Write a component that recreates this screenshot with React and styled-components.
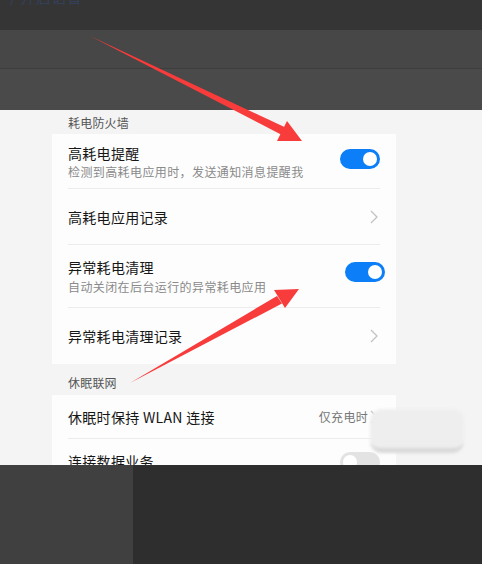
import React from "react";
import styled, { createGlobalStyle } from "styled-components";

const Global = createGlobalStyle`
  html, body { margin: 0; padding: 0; background: #2e2e2e; }
  body { font-family: "Noto Sans CJK SC", "Noto Sans", sans-serif; }
  * { box-sizing: border-box; }
`;

const Page = styled.div`
  position: relative;
  width: 482px;
  height: 564px;
  overflow: hidden;
  display: flex;
  flex-direction: column;
  & > * { flex-shrink: 0; }
`;

const TopBar = styled.div`
  height: 30px;
  background: #353535;
  overflow: hidden;
  padding-left: 10px;
  display: flex;
  align-items: flex-start;
`;

const TopText = styled.span`
  margin-top: -14px;
  font-size: 15px;
  color: #34405a;
  letter-spacing: 0.5px;
`;

const Band = styled.div`
  height: ${(p) => p.$h}px;
  background: ${(p) => p.$bg};
  border-top: ${(p) => (p.$line ? "1px solid #3d3d3d" : "none")};
`;

const Content = styled.div`
  height: 355px;
  background: #f4f4f4;
  display: flex;
  overflow: hidden;
`;

const Column = styled.div`
  margin-left: 52px;
  width: 344px;
  display: flex;
  flex-direction: column;
  & > * { flex-shrink: 0; }
`;

const SectionHeader = styled.div`
  height: ${(p) => p.$h}px;
  padding: ${(p) => p.$pt}px 16px 0;
  font-size: 12px;
  letter-spacing: 0.2px;
  color: #555;
  line-height: 16px;
`;

const Card = styled.div`
  background: #fdfdfd;
  padding: 0 16px;
  display: flex;
  flex-direction: column;
  & > * { flex-shrink: 0; }
`;

const Row = styled.div`
  height: ${(p) => p.$h}px;
  display: flex;
  align-items: center;
  justify-content: space-between;
  border-bottom: ${(p) => (p.$last ? "none" : "1px solid #ececec")};
  padding-top: ${(p) => p.$pt || 0}px;
`;

const TextBlock = styled.div`
  display: flex;
  flex-direction: column;
  gap: ${(p) => p.$gap || 2}px;
`;

const Title = styled.div`
  font-size: 14px;
  letter-spacing: 0.3px;
  color: #161616;
  line-height: 18px;
  margin-top: ${(p) => p.$mt || 0}px;
`;

const Sub = styled.div`
  font-size: 12px;
  letter-spacing: 0.4px;
  color: #8a8a8a;
  line-height: 15px;
`;

const Right = styled.div`
  display: flex;
  align-items: center;
`;

const Value = styled.span`
  font-size: 12px;
  letter-spacing: 0.3px;
  color: #777;
  margin-right: 2px;
`;

const Toggle = styled.div`
  width: 40px;
  height: 20px;
  border-radius: 10px;
  background: ${(p) => (p.$on ? "#0b7ef8" : "#e3e3e3")};
  display: flex;
  align-items: center;
  justify-content: ${(p) => (p.$on ? "flex-end" : "flex-start")};
  padding: 0 3px;
  margin-right: ${(p) => p.$mr || 0}px;
  margin-top: ${(p) => p.$mt || 0}px;
`;

const Knob = styled.div`
  width: 14px;
  height: 14px;
  border-radius: 50%;
  background: #fff;
`;

const Bottom = styled.div`
  height: 99px;
  display: flex;
`;

const BottomLeft = styled.div`
  width: 133px;
  background: #404040;
`;

const BottomRight = styled.div`
  flex: 1;
  background: #2e2e2e;
`;

const Blur = styled.div`
  position: absolute;
  left: 370px;
  top: 409px;
  width: 94px;
  height: 44px;
  border-radius: 12px;
  background: #eeeeee;
  border-bottom: 5px solid #d9d9d9;
  filter: blur(1.5px);
`;

const Overlay = styled.svg`
  position: absolute;
  left: 0;
  top: 0;
  pointer-events: none;
`;

const Chevron = ({ mr = 2 }) => (
  <svg width="8" height="14" viewBox="0 0 8 14" style={{ marginRight: mr }}>
    <path d="M1 1 L7 7 L1 13" fill="none" stroke="#c2c2c2" strokeWidth="1.3" />
  </svg>
);

export default function App() {
  return (
    <>
      <Global />
      <Page>
        <TopBar>
          <TopText>/ 开启语音</TopText>
        </TopBar>
        <Band $h={38} $bg="#474747" />
        <Band $h={42} $bg="#4a4a4a" $line />
        <Content>
          <Column>
            <SectionHeader $h={24} $pt={5}>耗电防火墙</SectionHeader>
            <Card>
              <Row $h={55} $pt={1}>
                <TextBlock $gap={2}>
                  <Title>高耗电提醒</Title>
                  <Sub>检测到高耗电应用时，发送通知消息提醒我</Sub>
                </TextBlock>
                <Toggle $on $mt={-6}>
                  <Knob />
                </Toggle>
              </Row>
              <Row $h={56}>
                <Title>高耗电应用记录</Title>
                <Chevron />
              </Row>
              <Row $h={63}>
                <TextBlock $gap={3}>
                  <Title>异常耗电清理</Title>
                  <Sub>自动关闭在后台运行的异常耗电应用</Sub>
                </TextBlock>
                <Toggle $on $mr={-5} $mt={-8}>
                  <Knob />
                </Toggle>
              </Row>
              <Row $h={56} $last>
                <Title>异常耗电清理记录</Title>
                <Chevron />
              </Row>
            </Card>
            <SectionHeader $h={31} $pt={11}>休眠联网</SectionHeader>
            <Card>
              <Row $h={44}>
                <Title>休眠时保持 WLAN 连接</Title>
                <Right>
                  <Value>仅充电时</Value>
                  <Chevron />
                </Right>
              </Row>
              <Row $h={40} $last>
                <Title $mt={4}>连接数据业务</Title>
                <Toggle $mt={6}>
                  <Knob />
                </Toggle>
              </Row>
            </Card>
          </Column>
        </Content>
        <Bottom>
          <BottomLeft />
          <BottomRight />
        </Bottom>
        <Blur />
        <Overlay width="482" height="564" viewBox="0 0 482 564">
          <polygon points="90,36 285.5,127.5 281,134.5" fill="#f83b3b" />
          <polygon points="302,141 287,121 277,141" fill="#f83b3b" />
          <polygon points="130,383 277,296 282,303.5" fill="#f83b3b" />
          <polygon points="299,289 274,290 285,308" fill="#f83b3b" />
        </Overlay>
      </Page>
    </>
  );
}
